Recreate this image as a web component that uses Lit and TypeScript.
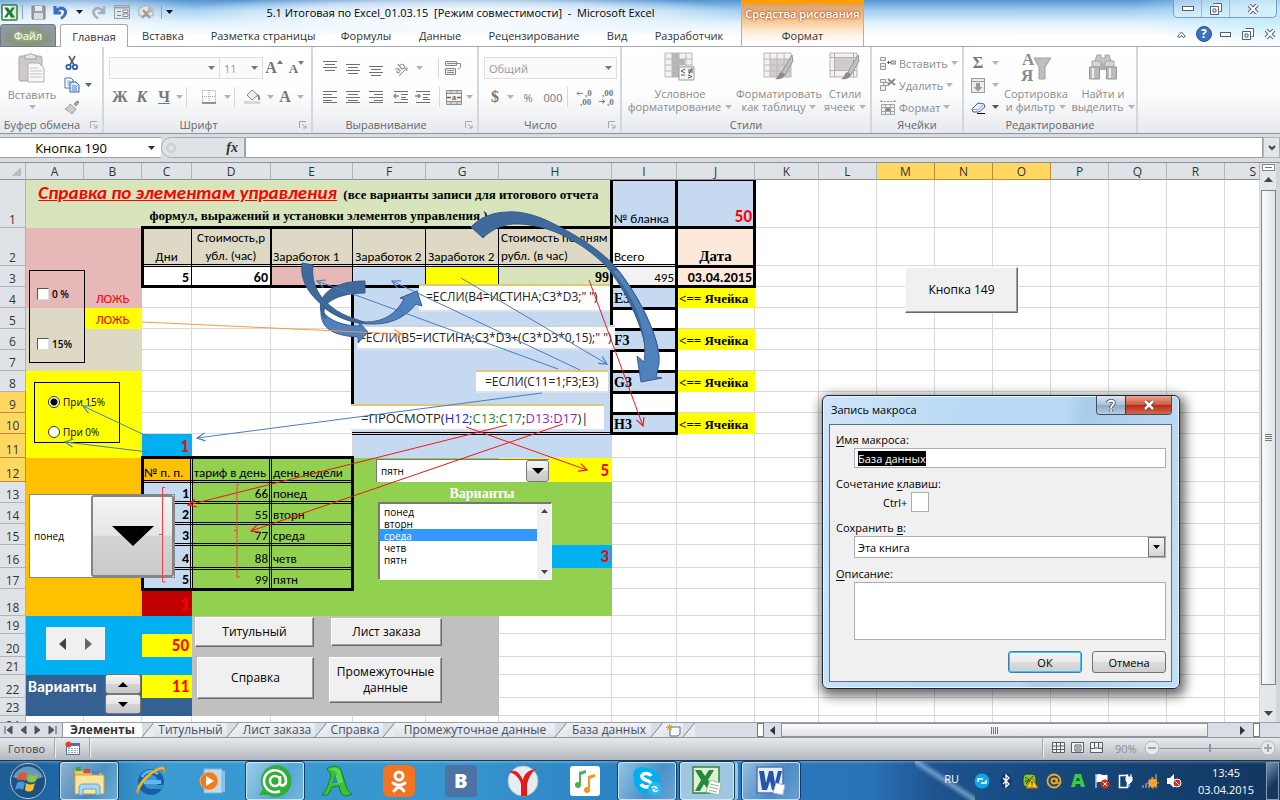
import { LitElement, html, css, svg, nothing } from "lit";
import { customElement } from "lit/decorators.js";
import { classMap } from "lit/directives/class-map.js";

const COLS: [string, number][] = [
  ["A", 58], ["B", 58], ["C", 50], ["D", 79], ["E", 82], ["F", 73], ["G", 73], ["H", 113], ["I", 65], ["J", 78],
  ["K", 64], ["L", 58], ["M", 58], ["N", 58], ["O", 58], ["P", 58], ["Q", 58], ["R", 58], ["S", 0],
];
const ROWS = [48, 38, 21, 21, 21, 21, 21, 21, 21, 21, 24, 24, 21, 21, 21, 23, 21, 27, 18, 23, 18, 23, 18, 18];

const FILLS: [string, string][] = [
  ["A1:H1", "sage"], ["I1:J1", "sky"],
  ["A2:B4", "rose"], ["C2:H2", "tan"], ["J2:J3", "peach"],
  ["E3:E3", "rose"], ["F3:F3", "sky"], ["G3:G3", "yellow"], ["H3:H3", "sage"], ["I3:I3", "pale"],
  ["A5:B7", "tan"], ["B5:B5", "yellow"], ["F4:H11", "sky"],
  ["I4:I4", "sky"], ["I6:I6", "sky"], ["I8:I8", "sky"], ["I10:I10", "sky"],
  ["J4:J4", "yellow"], ["J6:J6", "yellow"], ["J8:J8", "yellow"], ["J10:J10", "yellow"],
  ["A8:B11", "yellow"], ["C11:C11", "azure"],
  ["A12:C18", "orange"], ["C13:C17", "sky"], ["C18:C18", "crimson"],
  ["D12:H18", "green"], ["H12:H12", "yellow"], ["H16:H16", "azure"],
  ["A19:C21", "azure"], ["C20:C20", "yellow"], ["A22:C23", "navy"], ["C22:C22", "yellow"],
  ["D19:G23", "gray"],
];

const TEXTS: Record<string, [string, string]> = {
  I1: ["№ бланка", ""], J1: ["50", "right red large"],
  C2: ["Дни", "center"], D2: ["Стоимость,р\nубл. (час)", "center two"], E2: ["Заработок 1", ""],
  F2: ["Заработок 2", ""], G2: ["Заработок 2", ""], H2: ["Стоимость по дням\nрубл. (в час)", "two"],
  I2: ["Всего", ""], J2: ["Дата", "center serif mid"],
  C3: ["5", "right bold"], D3: ["60", "right bold"], H3: ["99", "right serif"], I3: ["495", "right"], J3: ["03.04.2015", "right bold"],
  B4: ["ЛОЖЬ", "center redtext"], B5: ["ЛОЖЬ", "center redtext"],
  I4: ["E3", "serif"], I6: ["F3", "serif"], I8: ["G3", "serif"], I10: ["H3", "serif"],
  J4: ["<== Ячейка", "serif minor"], J6: ["<== Ячейка", "serif minor"], J8: ["<== Ячейка", "serif minor"], J10: ["<== Ячейка", "serif minor"],
  C11: ["1", "right red large"],
  C12: ["№ п. п.", ""], D12: ["тариф в день", ""], E12: ["день недели", ""],
  C13: ["1", "right bold"], D13: ["66", "right"], E13: ["понед", ""],
  C14: ["2", "right bold"], D14: ["55", "right"], E14: ["вторн", ""],
  C15: ["3", "right bold"], D15: ["77", "right"], E15: ["среда", ""],
  C16: ["4", "right bold"], D16: ["88", "right"], E16: ["четв", ""],
  C17: ["5", "right bold"], D17: ["99", "right"], E17: ["пятн", ""],
  C18: ["1", "right red large"], H12: ["5", "right red large"], H16: ["3", "right red large"],
  C20: ["50", "right red large"], C22: ["11", "right red large"], A22: ["Варианты", "white over"],
};

const fillOf = (c: number, r: number) => {
  let name = "";
  for (const [range, fill] of FILLS) {
    const [a, b] = range.split(":");
    const c1 = a.charCodeAt(0) - 65, c2 = b.charCodeAt(0) - 65;
    const r1 = +a.slice(1), r2 = +b.slice(1);
    if (c >= c1 && c <= c2 && r >= r1 && r <= r2) name = fill;
  }
  return name;
};

const box = (w: number, h: number, body: unknown, vb = `0 0 ${w} ${h}`) =>
  html`<svg width=${w} height=${h} viewBox=${vb} aria-hidden="true">${body}</svg>`;
const tri = (color = "#444") => html`<svg class="tri" width="7" height="4" viewBox="0 0 7 4" aria-hidden="true"><path d="M0 0h7L3.500 4z" fill=${color} /></svg>`;
const faint = () => tri("#b4b4b4");

const bars = (ys: number[], xs: [number, number][]) =>
  box(16, 16, ys.map((y, i) => svg`<path d="M${xs[i][0]} ${y + 0.5}H${xs[i][1]}" stroke="#6f6f6f" />`));
const full: [number, number][] = [[1, 15], [3, 13], [1, 15], [3, 13], [1, 15], [3, 13]];
const restore = svg`<path d="M3.500 .5h8v8h-2M.5 3.500h8v8h-8z" fill="#fff" stroke="#555f6b"/><path d="M3 6h3v3H3z" fill="none" stroke="#555f6b"/>`;
const cross = svg`<path d="M2 1l8 8M10 1L2 9" stroke="#555f6b" stroke-width="4"/><path d="M2 1l8 8M10 1L2 9" stroke="#fff" stroke-width="2"/>`;

const I = {
  excelSmall: () => box(17, 17, svg`<rect x="1" y="1" width="15" height="15" rx="1" fill="#fff" stroke="#2f7d3a" stroke-width="1.500"/><path d="M9 2h6v13H9z" fill="#d7ecd0"/><path d="M3 3.500h4l2 3 2-3h3L10.500 8.300 14 13.500h-4L8 10.300 6 13.500H3l3.500-5z" fill="#1d7a35"/>`),
  save: () => box(15, 15, svg`<path d="M1 1h13v13H1z" fill="#9a9ea5" stroke="#7e8288"/><path d="M4 1h7v5H4z" fill="#e8eaee"/><path d="M3 8h9v6H3z" fill="#d9dce1"/>`),
  undo: () => box(15, 15, svg`<path d="M2 1v7h6M3 7C5 3 9 2 11.500 4.500S12 11 8 13.500" fill="none" stroke="#3a6fc4" stroke-width="3"/>`),
  redo: () => box(15, 15, svg`<path d="M13 1v7H7M12 7C10 3 6 2 3.500 4.500S3 11 7 13.500" fill="none" stroke="#a7afba" stroke-width="2.600"/>`),
  form: () => box(16, 14, svg`<rect x=".5" y=".5" width="15" height="13" fill="#e3e6ea" stroke="#9a9fa6"/><path d="M1 2.500h14" stroke="#9a9fa6" stroke-width="2"/><path d="M3 6.500h4M3 10.500h4" stroke="#83888f"/><path d="M9 5h5v2.500H9zM9 9h5v2.500H9z" fill="#fff" stroke="#83888f"/>`),
  toolsPic: () => box(17, 16, svg`<path d="M1 4h3l1-2h5l1 2h4v8H1z" fill="#e9e5e6" stroke="#b0aaac"/><path d="M4 14l8-8M12 14L5 6" stroke="#9e989a" stroke-width="2.200"/><circle cx="12" cy="6" r="2.500" fill="#bdb6b8"/>`),
  paste: () => box(28, 32, svg`<rect x="1" y="4" width="23" height="25" rx="2" fill="#cfc9cc" stroke="#aaa4a7"/><path d="M7 7V3h3a3 3 0 0 1 5 0h3v4z" fill="#e7e5e6" stroke="#a6a1a4"/><path d="M10 11h11l5 5v14H10z" fill="#f7f7f7" stroke="#b3aeb1"/><path d="M12 16h8M12 19h12M12 22h12M12 25h12" stroke="#c9c5c7"/>`),
  cut: () => box(14, 16, svg`<path d="M4 1l5 9M10 1L5 10" stroke="#54606e" stroke-width="1.600"/><circle cx="3.500" cy="12" r="2.200" fill="none" stroke="#2f5fb5" stroke-width="1.800"/><circle cx="10" cy="12" r="2.200" fill="none" stroke="#2f5fb5" stroke-width="1.800"/>`),
  copy: () => box(16, 16, svg`<path d="M1 1h6l2 2v8H1z" fill="#fff" stroke="#3f72b8"/><path d="M3 4h3M3 6h3M3 8h3" stroke="#7ba0d4"/><path d="M6 5h6l3 3v7H6z" fill="#dbe8f8" stroke="#3465ad"/><path d="M8 9h5M8 11h5M8 13h5" stroke="#5c89c8"/>`),
  brush: () => box(16, 15, svg`<path d="M10 4l3-3 2 1-3 4z" fill="#aaa" stroke="#888"/><path d="M6 4l6 5-4 5C6 12 3 10 1 9c3-1 4-3 5-5z" fill="#cfcfcf" stroke="#9a9a9a"/>`),
  growFont: (up: boolean) => box(7, 20, up ? svg`<path d="M0 6h6L3 2z" fill="#777"/>` : svg`<path d="M0 3h6L3 7z" fill="#777"/>`),
  borders: () => box(14, 14, svg`<path d="M.5 .5h13v12H.5zM7 0v13M0 6.500h14" fill="none" stroke="#a0a0a0" stroke-dasharray="1 1"/><path d="M0 13h14" stroke="#777" stroke-width="1.500"/>`),
  bucket: () => box(17, 16, svg`<path d="M3 6l5-5 6 5-6 5z" fill="#eee" stroke="#888"/><path d="M13 6c3 1 2 4 2 5" stroke="#888" stroke-width="2" fill="none"/><path d="M0 12h16v3H0z" fill="#dcd6d8"/>`),
  orient: () => box(18, 18, svg`<text x="2" y="12" font-size="10" font-weight="400" font-family="Open Sans,sans-serif" fill="#777" transform="rotate(-40 8 9)">ab</text><path d="M7 17l8-8m0 0h-3m3 0v3" stroke="#8a8a8a" fill="none"/>`),
  outdent: () => box(16, 14, svg`<path d="M1 1.500h14M8 4.500h7M8 7.500h5M8 9.500h7M1 12.500h14" stroke="#6f6f6f"/><path d="M6 6H1m2-2L1 6l2 2" stroke="#8a8a8a" fill="none" stroke-width="1.500"/>`),
  indent: () => box(16, 14, svg`<path d="M1 1.500h14M8 4.500h7M8 7.500h5M8 9.500h7M1 12.500h14" stroke="#6f6f6f"/><path d="M0 6h5m-2-2l2 2-2 2" stroke="#8a8a8a" fill="none" stroke-width="1.500"/>`),
  wrap: () => box(16, 16, svg`<path d="M.5 1.500h11v4H.5zM.5 8.500h10v6H.5z" fill="#eee" stroke="#8a8a8a"/><path d="M2 3.500h13.500v4L13 9M2 10.500h7M2 12.500h7" stroke="#8a8a8a" fill="none"/>`),
  merge: () => box(16, 15, svg`<path d="M.5 .5h15v14H.5zM0 3.500h16M0 11.500h16M5 0v3M11 0v3M5 12v3M11 12v3" fill="#d8d8d8" stroke="#909090"/><path d="M1 4h14v7H1z" fill="#f4f4f4"/><text x="6" y="10" font-size="8" font-weight="700" fill="#666">a</text><path d="M1 7.500h4M11 7.500h4" stroke="#666" stroke-width="1.500"/>`),
  cond: () => box(32, 31, svg`<path d="M1 1h27v24H1z" fill="#f3f1f2"/><path d="M8 1h7v24H8zM15 7h6v6h-6z" fill="#b9b5b7"/><path d="M1 1h27v24H1zM1 7h27M1 13h27M1 19h27M8 1v24M15 1v24M22 1v24" fill="none" stroke="#bcb8ba"/><path d="M15 15h15v13H15z" fill="#f6f6f6" stroke="#999"/><path d="M21 17l-4 2 4 2M17 23h4M24 18h5M24 20h5M28 16l-3 6M24 23l4 1.500-4 1.500" stroke="#555" fill="none"/>`),
  tableStyle: () => box(32, 31, svg`<path d="M1 1h27v24H1z" fill="#f3f1f2"/><path d="M7 7h21v18H7z" fill="#d2ced0"/><path d="M1 1h27v24H1zM1 7h27M1 13h27M1 19h27M7 1v24M14 1v24M21 1v24" fill="none" stroke="#bcb8ba"/><path d="M29 3L19 20l3 3L30 9z" fill="#c4c0c2" stroke="#979395"/><path d="M18 20l4 3c-2 4-6 5-10 4 3-1 3-5 6-7z" fill="#8e8a8c"/>`),
  cellStyle: () => box(32, 31, svg`<path d="M1 1h27v24H1z" fill="#f3f1f2"/><path d="M5 6h19v12H5z" fill="#cfcbcd"/><path d="M1 1h27v24H1zM1 5.500h27M1 18.500h27M5.500 1v24M24.500 1v24" fill="none" stroke="#b5b1b3"/><path d="M29 3L19 20l3 3L30 9z" fill="#c4c0c2" stroke="#979395"/><path d="M18 20l4 3c-2 4-6 5-10 4 3-1 3-5 6-7z" fill="#8e8a8c"/>`),
  ins: () => box(16, 15, svg`<path d="M.5 1.500h5v3h-5zM.5 7.500h5v3h-5zM.5 10.500h5v3h-5z" fill="#eee" stroke="#999"/><path d="M7 6.500h4M8.500 5v3" stroke="#555"/><path d="M11 5h5v3h-5z" fill="#ccc" stroke="#888"/>`),
  del: () => box(16, 15, svg`<path d="M.5 1.500h5v3h-5zM3.500 4.500h5v3h-5zM.5 7.500h5v5h-5z" fill="#eee" stroke="#999"/><path d="M8 1l7 6M15 1L8 7" stroke="#8a8a8a" stroke-width="2"/>`),
  fmt: () => box(16, 16, svg`<path d="M1 2.500h14M1 1v3M15 1v3" stroke="#999" stroke-dasharray="2 1"/><path d="M1.500 5.500h13v10h-13zM1 8.500h14M1 12.500h14M5.500 5v10M10.500 5v10" fill="#eee" stroke="#a5a5a5"/><path d="M6 9h4v3H6z" fill="#888"/>`),
  fillDown: () => box(14, 15, svg`<rect x=".5" y=".5" width="13" height="14" fill="#ececec" stroke="#9a9a9a"/><path d="M1 3.500h12" stroke="#9a9a9a"/><path d="M5 5h4v4h2.500L7 13.500 2.500 9H5z" fill="#999"/>`),
  eraser: () => box(15, 13, svg`<path d="M1 8l6-6 6 1 1 3-6 5-6 0z" fill="#e8effa" stroke="#4c5f85"/><path d="M1 8l6 1 6-6" fill="none" stroke="#8fa3c8"/><path d="M6 12.500h8" stroke="#000"/>`),
  sort: () => box(30, 31, svg`<path d="M13 6h17l-6 9v12h-6V15z" fill="#c1bec0" stroke="#a19d9f"/><text x="1" y="13" font-family="Liberation Serif,serif" font-size="17" font-weight="700" fill="#8d8a8c">А</text><text x="0" y="29" font-family="Liberation Serif,serif" font-size="17" font-weight="700" fill="#8d8a8c">Я</text>`),
  find: () => box(28, 31, svg`<path d="M8 3h4v3h4V3h4l3 9H5z" fill="#c9c6c8" stroke="#a5a2a4"/><path d="M11 12h6v6h-6z" fill="#b3b0b2"/><path d="M3 9h9v6H3zM16 9h9v6h-9z" fill="#d6d3d5" stroke="#a5a2a4"/><path d="M.5 15h10v12H.5zM17.500 15h10v12h-10z" fill="#bdbabc" stroke="#999698"/><path d="M4 16v10M21 16v10" stroke="#f0eeef" stroke-width="2"/>`),
  launcher: () => box(8, 8, svg`<path d="M.5 7V.5H7M3 3l4 4m0-3v3H4" fill="none" stroke="#a3a8ae"/>`),
};

@customElement("app-root")
export class AppRoot extends LitElement {
  static styles = css`
    :host {
      display: flex; flex-direction: column; height: 100vh; overflow: hidden; background: #fff;
      font-family: "Open Sans", "Noto Sans", sans-serif; font-size: 12px; color: #1e1e1e;
    }
    * { box-sizing: border-box; }
    svg { display: block; flex: none; }
    button, input, select, textarea { font: inherit; color: inherit; margin: 0; padding: 0; border-radius: 0; }
    button { border: 0; background: none; white-space: nowrap; }

    .head { display: flex; flex: none; height: 47px; border-bottom: 1px solid #a3a9b1; font-size: 11px;
      background: radial-gradient(ellipse 280px 20px at 460px 13px, rgba(255,255,255,.95), rgba(255,255,255,.6) 60%, transparent),
        radial-gradient(ellipse 130px 26px at 70px 14px, rgba(255,255,255,.8), transparent),
        radial-gradient(ellipse 150px 40px at 100% 10px, rgba(190,236,255,.95), transparent),
        linear-gradient(#5795d2, #9fcdf0 22%, #e2f2fc 50%, #fff 80%); }
    .head-main { flex: none; width: 741px; }
    .title-row { display: flex; height: 24px; align-items: center; }
    .qat { display: flex; align-items: center; width: 180px; padding-left: 1px; }
    .qat button { display: grid; place-items: center; width: 16px; height: 20px; }
    .qat button.wide { width: 22px; }
    .qat button.gap { width: 26px; }
    .bar { width: 1px; height: 14px; background: #8fa0b5; margin: 0 4px; }
    .title { flex: 1; text-align: center; white-space: pre; color: #000; }
    .tabs { display: flex; height: 23px; }
    .tabs button { color: #333; height: 23px; padding-bottom: 1px; }
    .tabs .file { width: 56px; margin-right: 4px; border-radius: 3px 3px 0 0; color: #fff; border: 1px solid #6f7b88;
      background: radial-gradient(ellipse at 50% 60%, #7b9a5e, #87957f 45%, #929ba6 80%); text-shadow: 0 0 4px #cfe6b0; }
    .tabs .on { background: #fff; border: 1px solid #a3a9b1; border-bottom: 0; border-radius: 3px 3px 0 0; height: 24px; width: 68px; }
    .ctx { flex: none; width: 123px; text-align: center; border-top: 4px solid #ff9d00; border-left: 1px solid #f2a04a; border-right: 1px solid #f2a04a;
      background: linear-gradient(#dba06a, #f5c994 40%, #fff5e8 75%, #fff); }
    .ctx span { display: block; height: 20px; line-height: 20px; color: #fff; font-weight: 600; text-shadow: 0 0 2px #b8521d, 0 0 3px #b8521d; }
    .ctx button { width: 100%; height: 22px; color: #333; }
    .head-right { flex: 1; display: flex; flex-direction: column; align-items: flex-end; }
    .wctl { display: flex; margin-right: 3px; height: 18px; border: 1px solid #7f9db8; border-top: 0; border-radius: 0 0 5px 5px; background: rgba(255,255,255,.35); }
    .wctl button { display: grid; place-items: center; width: 28px; border-right: 1px solid #9db6cc; }
    .wctl button:last-child { width: 46px; border: 0; }
    .dctl { display: flex; align-items: center; gap: 1px; padding: 6px 0 0; }
    .dctl button { display: grid; place-items: center; width: 21px; height: 20px; }

    .ribbon { display: flex; flex: none; height: 87px; font-size: 11px; color: #8c8c8c;
      background: linear-gradient(#fff, #fcfdfd 55%, #e6e9ed); border-bottom: 1px solid #8f959c; }
    .group { display: flex; flex-direction: column; border-right: 2px solid #d4d8dd; flex: none; }
    .gbody { display: flex; height: 71px; padding-top: 5px; }
    .gname { position: relative; height: 15px; line-height: 13px; color: #63676d; display: flex; justify-content: center; }
    .gname.launch { padding-right: 18px; }
    .gname button { position: absolute; right: 4px; top: 3px; }
    .col { display: flex; flex-direction: column; }
    .pad8 { padding-left: 8px; }
    .line { display: flex; align-items: center; height: 22px; }
    .two-lines { gap: 7px; padding: 5px 0 0 5px; }
    .slot { display: flex; align-items: center; justify-content: center; height: 20px; flex: none; color: #777; font-family: "Liberation Serif", serif; font-size: 16px; font-weight: 700; }
    .w5 { width: 5px; } .w8 { width: 8px; } .w12 { width: 12px; } .w16 { width: 16px; } .w22 { width: 22px; } .w23 { width: 23px; } .w28 { width: 28px; }
    .vsep { width: 1px; height: 20px; background: #d5d8dc; margin: 0 3px; flex: none; }
    .drop { display: flex; align-items: center; justify-content: space-between; height: 22px; border: 1px solid #dcdfe3; background: #fafafa; padding: 0 4px; color: #999; }
    .f1 { width: 111px; } .f2 { width: 43px; border-left: 0; } .f3 { width: 133px; }
    .bigbtn { display: flex; flex-direction: column; align-items: center; line-height: 13px; }
    .bigbtn > svg:first-child { margin-bottom: 4px; }
    .bigbtn > svg.tri { margin-top: 4px; }
    .bigbtn .cap { display: flex; align-items: center; gap: 4px; }
    .plain { font-size: 11px; font-family: "Open Sans", sans-serif; font-weight: 400; }
    .shorter { font-size: 13px; padding-top: 2px; }
    .cellbtn { display: flex; align-items: center; gap: 3px; height: 22px; }

    .fbar { display: flex; flex: none; height: 29px; padding: 3px 0 4px; background: #d9dde3; border-bottom: 1px solid #8c9197; }
    .namebox { display: flex; align-items: center; width: 161px; background: #fff; border: 1px solid #9ca1a8; border-left: 0; border-right: 0; padding-right: 6px; font-size: 13px; }
    .namebox input { width: 140px; flex: 1; border: 0; background: none; text-align: center; padding-right: 6px; color: #000; outline: 0; }
    .fx { display: flex; align-items: center; justify-content: space-between; width: 84px; border: 1px solid #a5aab1; border-radius: 11px 0 0 11px; background: #dfe3e7; padding: 0 6px 0 4px; }
    .knob { width: 10px; height: 10px; border-radius: 50%; background: radial-gradient(#eef0f2, #b2b7bd); }
    .fx button { font: italic 700 14px "Liberation Serif", serif; color: #333; }
    .formula { flex: 1; border: 1px solid #9ca1a8; background: #fff; min-width: 0; outline: 0; }
    .expand { width: 17px; display: grid; place-items: center; background: #e3e6ea; border: 1px solid #b0b5bc; }

    .work { display: flex; flex: 1; min-height: 0; }
    .sheet { position: relative; flex: 1; overflow: hidden; background: #fff; min-width: 0; }
    table { border-collapse: separate; border-spacing: 0; table-layout: fixed; width: 100%; font-family: "Carlito", "Lato", "Open Sans", sans-serif; font-size: 13px; }
    th { font-weight: 400; padding: 0; background: #dfe3e8; border-right: 1px solid #b0b5bc; border-bottom: 1px solid #b0b5bc; color: #333; line-height: 15px; font-size: 12px; vertical-align: bottom; font-family: "Open Sans", sans-serif; }
    thead th { height: 17px; vertical-align: middle; border-bottom-color: #8c9197; }
    th.hot { background: #ffd862; border-color: #c48a33; }
    th.last { text-align: right; padding-right: 3px; }
    td { padding: 0 2px; border-right: 1px solid #d9d9d9; border-bottom: 1px solid #d9d9d9; vertical-align: bottom; line-height: 17px; white-space: pre; overflow: hidden; color: #000; }
    td.filled { border-color: transparent; }
    .sage { background: #d8e4bc; } .sky { background: #c5d9f1; } .rose { background: #e6b8b7; } .tan { background: #ddd9c4; }
    .peach { background: #fde9d9; } .yellow { background: #ff0; } .pale { background: #f2f2f2; } .azure { background: #00b0f0; }
    .orange { background: #ffc000; } .green { background: #92d050; } .crimson { background: #c00000; } .navy { background: #366092; } .gray { background: #c0c0c0; }
    td.right { text-align: right; } td.center { text-align: center; } td.bold { font-weight: 700; font-size: 14px; }
    td.red { color: #f00; font-weight: 700; } td.redtext { color: #f00; } td.large { font-size: 17px; line-height: 20px; }
    td.serif { font-family: "Liberation Serif", serif; font-weight: 700; font-size: 14px; } td.serif.minor { font-size: 13px; } td.serif.mid { font-size: 15px; }
    td.two { line-height: 18px; } td.white { color: #fff; font-weight: 700; font-size: 16px; line-height: 20px; } td.over { overflow: visible; }
    td.heading { text-align: center; font: 700 13px/23px "Liberation Serif", serif; }
    .heading div { height: 23px; overflow: visible; }
    .heading a { font: italic 700 19px/23px "Carlito", "Lato", "Open Sans", sans-serif; color: #f00; text-decoration: underline; }
    .corner { display: block; width: 0; height: 0; margin: 0 4px 0 auto; border-left: 9px solid transparent; border-bottom: 9px solid #b6bbc1; }

    .lines, .arrows { position: absolute; left: 0; top: 0; pointer-events: none; }
    .obj { position: absolute; }
    .frame { border: 1px solid #000; display: flex; flex-direction: column; justify-content: space-between; font-size: 10px; color: #000; font-weight: 600; }
    .frame label { display: flex; align-items: center; gap: 3px; height: 12px; line-height: 12px; white-space: nowrap; }
    .frame input { appearance: none; width: 12px; height: 12px; background: #fff; border: 1px solid #555; border-right-color: #ddd; border-bottom-color: #ddd; flex: none; }
    .frame input[type="radio"] { border: 1px solid #333; border-radius: 50%; }
    .frame input[type="radio"]:checked { background: radial-gradient(#000 3px, #fff 4px); }
    .checks { left: 29px; top: 107px; width: 56px; height: 93px; padding: 17px 7px 12px; }
    .radios { left: 34px; top: 219px; width: 86px; height: 61px; padding: 13px 12px 4px 13px; font-weight: 400; }
    .picker { display: flex; background: #fff; border: 1px solid #888; }
    .picker select { appearance: none; border: 0; background: none; flex: 1; min-width: 0; font-size: 10px; color: #000; padding-left: 4px; outline: 0; }
    .picker button, .vspin button { display: grid; place-items: center; border: 1px solid #777; border-radius: 3px; background: linear-gradient(#f4f4f4, #e6e6e6 49%, #d4d4d4 50%, #c9c9c9); }
    .bigpick { left: 29px; top: 331px; width: 146px; height: 84px; }
    .bigpick button { width: 83px; border: 2px solid #858585; }
    .combo { left: 376px; top: 296px; width: 173px; height: 23px; border: 0; border-top: 1px solid #777; border-left: 1px solid #777; }
    .combo button { width: 23px; }
    .hspin { left: 46px; top: 464px; width: 59px; height: 33px; display: flex; justify-content: space-around; align-items: center; background: #f0f0f0; padding: 0 4px 0 3px; }
    .vspin { left: 105px; top: 511px; width: 36px; height: 40px; display: flex; flex-direction: column; }
    .vspin button { flex: 1; }
    .cmd { position: absolute; background: #f0f0f0; border: 1px solid #fff; border-right: 1px solid #696969; border-bottom: 1px solid #696969; box-shadow: inset -1px -1px #a0a0a0; color: #000; font-size: 12px; line-height: 16px; white-space: normal; }
    .c1 { left: 195px; top: 454px; width: 119px; height: 30px; } .c2 { left: 331px; top: 455px; width: 111px; height: 28px; }
    .c3 { left: 197px; top: 494px; width: 117px; height: 42px; } .c4 { left: 329px; top: 494px; width: 113px; height: 46px; }
    .c5 { left: 905px; top: 104px; width: 113px; height: 46px; }
    .caption { left: 376px; top: 322px; width: 212px; text-align: center; font: 700 14px/17px "Liberation Serif", serif; color: #fff; }
    .list { left: 378px; top: 339px; width: 174px; height: 78px; display: flex; background: #fff; border: 1px solid #fff; border-top: 2px solid #777; border-left: 2px solid #777; }
    .list select { appearance: none; flex: 1; border: 0; overflow: hidden; background: #fff; font-size: 10px; line-height: 12px; color: #000; padding: 1px 0; outline: 0; height: 74px; }
    .list option { padding: 0 4px; height: 12px; min-height: 12px; line-height: 12px; }
    .list option:checked { background: #39f linear-gradient(#39f, #39f); color: #fff; }
    .lscroll { width: 14px; display: flex; flex-direction: column; justify-content: space-between; align-items: center; padding: 5px 0; background: #f0f0f0; }
    .pic { position: absolute; background: #fff; border-top: 2px solid #e0c878; border-bottom: 2px solid #dde2ea; color: #222; font-family: "Open Sans", sans-serif; white-space: pre; font-size: 12px; line-height: 21px; padding-left: 7px; overflow: hidden; }
    .p1 { left: 419px; top: 121px; width: 191px; height: 28px; }
    .p2 { left: 357px; top: 162px; width: 258px; height: 25px; padding-left: 2px; border-top-color: #cfd3da; }
    .p3 { left: 476px; top: 207px; width: 132px; height: 23px; padding-left: 9px; line-height: 20px; }
    .p4 { left: 351px; top: 241px; width: 253px; height: 27px; padding-left: 10px; font-size: 13px; line-height: 25px; }
    .blue { color: #2222e0; } .grn { color: #1d8a1d; } .vio { color: #9a1dc4; }

    .dialog { position: absolute; left: 822px; top: 232px; width: 358px; height: 294px; border: 1px solid #1c2733; border-radius: 6px; padding: 0 7px 6px 6px; display: flex; flex-direction: column;
      background: linear-gradient(100deg, #cfe5f8, #b9daf6 35%, #b9daf6 60%, #a9cceb 65%, #c3dff7); box-shadow: inset 0 0 0 1px #eaf5fd, 2px 4px 12px 3px rgba(0,0,0,.6); color: #000; font-size: 11px; }
    .dtitle { display: flex; justify-content: space-between; height: 28px; flex: none; padding-left: 2px; }
    .dtitle span { line-height: 28px; }
    .dbtns { display: flex; height: 19px; border: 1px solid #3d4f60; border-top: 0; border-radius: 0 0 4px 4px; overflow: hidden; }
    .dbtns button { display: grid; place-items: center; width: 28px; color: #fff; background: linear-gradient(#dfe8f1, #a9bfd4 50%, #8fabc6 51%, #b5cbe0); }
    .dbtns .close { width: 46px; border-left: 1px solid #5a2a20; background: linear-gradient(#e8a493, #cf5b42 48%, #b62b16 52%, #d3694c); }
    .dbody { flex: 1; background: #f0f0f0; border: 1px solid #5c6d7d; padding: 6px 5px 8px 6px; display: flex; flex-direction: column; }
    .dbody label { line-height: 17px; height: 17px; flex: none; }
    .dbody u { text-underline-offset: 2px; }
    .field { margin-left: 18px; border: 1px solid #abadb3; background: #fff; height: 20px; display: flex; align-items: center; flex: none; }
    input.field { padding: 0 3px; outline: 0; }
    input::selection { background: #000; color: #fff; }
    .keys { display: flex; align-items: center; gap: 4px; height: 20px; margin-left: 47px; flex: none; }
    .keys input { width: 18px; height: 20px; border: 1px solid #abadb3; }
    .sel { height: 22px; padding-left: 3px; }
    .sel select { appearance: none; border: 0; flex: 1; background: none; outline: 0; }
    .sel button { width: 17px; height: 20px; display: grid; place-items: center; border: 1px solid #777; background: linear-gradient(#f4f4f4, #d4d4d4); }
    .space { margin-top: 7px; }
    textarea.field { height: 58px; resize: none; outline: 0; }
    .acts { display: flex; justify-content: flex-end; gap: 10px; margin-top: auto; }
    .acts button { width: 74px; height: 22px; border: 1px solid #707070; border-radius: 3px; background: linear-gradient(#f3f3f3, #ebebeb 49%, #dcdcdc 50%, #cfcfcf); }
    .acts .def { border-color: #3c7fb1; box-shadow: inset 0 0 0 1px #3cc7f3; }

    .vscroll { width: 20px; flex: none; display: flex; flex-direction: column; align-items: center; background: #e3e7ec; border-right: 4px solid #d0d5dc; padding: 1px 0 6px; }
    .vsplit { width: 13px; height: 7px; border: 1px solid #888; background: #fff; flex: none; display: grid; place-items: center; }
    .up { margin: 6px 0 8px; } .down { margin-top: 26px; }
    .vthumb { flex: 1; width: 15px; border: 1px solid #7b8590; background: linear-gradient(90deg, #fbfbfc, #dfe3e8); display: grid; place-items: center; }

    .sheets { display: flex; flex: none; height: 16px; background: #d9dee6; border-top: 1px solid #9a9fa6; border-bottom: 1px solid #8e939a; font-size: 12px; color: #44505f; }
    .nav { display: flex; width: 63px; align-items: center; justify-content: space-around; padding: 0 2px; border-right: 1px solid #8e939a; }
    .nav button { display: grid; place-items: center; width: 12px; }
    .sheets .tab { flex: none; line-height: 14px; color: #44505f; height: 14px; display: grid; place-items: center; background: linear-gradient(#eef1f5, #dfe3e9); }
    .sheets .tab.act { font-weight: 700; background: #fff; color: #333; }
    .hsplit { width: 7px; height: 14px; border: 1px solid #777; background: #fff; margin-left: 62px; flex: none; }
    .hs { display: flex; align-items: center; flex: 1; padding-left: 6px; }
    .hs .hsplit { margin: 0 20px 0 8px; }
    .hthumb { flex: 1; height: 14px; border: 1px solid #8f949b; background: linear-gradient(#fbfbfc, #dfe3e8); display: grid; place-items: center; margin: 0 32px 0 6px; }

    .status { display: flex; flex: none; align-items: center; height: 22px; background: linear-gradient(#e6e9ec, #c9ccd1 60%, #b4b8be); color: #444; font-size: 11px; padding: 0 4px 2px 8px; }
    .status .s { width: 2px; height: 20px; background: #a2a6ac; border-right: 1px solid #eee; margin: 0 9px; }
    .status .s.push { margin: 0 8px 0 auto; }
    .views { display: flex; gap: 5px; margin: 0 11px 0 0; }
    .zoom { color: #8d9095; width: 29px; }
    .track { position: relative; width: 100px; height: 1px; background: #8b95a3; }
    .track i { position: absolute; left: 49px; top: -4px; width: 2px; height: 8px; background: #8b95a3; }

    .taskbar { display: flex; flex: none; height: 40px; align-items: center; border-top: 1px solid #16385c;
      background: linear-gradient(rgba(255,255,255,.25), transparent 8%),
        linear-gradient(to bottom left, transparent 42%, rgba(160,200,230,.6) 50%, transparent 58%) 75% 0 / 60px 100% no-repeat,
        linear-gradient(90deg, #1d5c94, #1f6aa8 5%, #3b9ad0 12%, #3796cf 35%, #2a80c2 50%, #2a72b8 68%, #1d548f 73%, #16497d 82%, #12365f); }
    .start { width: 56px; display: grid; place-items: center; margin-right: 4px; }
    .apps { display: flex; gap: 4px; height: 38px; }
    .apps button { width: 58px; height: 38px; display: grid; place-items: center; border-radius: 3px; border: 1px solid transparent; }
    .apps .run { border-color: rgba(220,240,255,.8); background: linear-gradient(120deg, rgba(255,255,255,.5), rgba(255,255,255,.15) 60%, rgba(255,255,255,.3)); box-shadow: 0 0 0 1px #153e66; }
    .apps .cur { background: rgba(225,240,245,.65); width: 54px; margin-right: 4px; box-shadow: 0 0 0 1px #153e66, 4px 0 0 0 rgba(190,215,235,.8); }
    .tray { margin-left: auto; display: flex; align-items: center; color: #fff; font-size: 11px; }
    .lang { margin-right: 11px; padding-bottom: 4px; }
    .tray button { width: 24px; display: grid; place-items: center; }
    .clock { text-align: center; line-height: 17px; width: 76px; margin: 0 2px; }
    .tray .desk { width: 13px; height: 38px; margin-right: 1px; border: 1px solid #7f9cb8; background: linear-gradient(135deg, #7594b4, #17375c 60%); }
  `;

  private title() {
    const tabs: [string, number][] = [["Вставка", 70], ["Разметка страницы", 130], ["Формулы", 76], ["Данные", 72], ["Рецензирование", 116], ["Вид", 50], ["Разработчик", 94]];
    return html`<header class="head">
      <div class="head-main">
        <div class="title-row">
          <div class="qat">
            ${I.excelSmall()}<i class="bar"></i>
            <button aria-label="Сохранить" class="wide">${I.save()}</button>
            <button aria-label="Отменить" class="wide">${I.undo()}</button>
            <button aria-label="Список отмены">${tri("#222")}</button>
            <button aria-label="Вернуть" class="wide">${I.redo()}</button>
            <button aria-label="Форма" class="gap">${I.form()}</button>
            <button aria-label="Сервис" class="wide">${I.toolsPic()}</button>
            <i class="bar"></i>${tri("#111")}
          </div>
          <span class="title">5.1 Итоговая по Excel_01.03.15  [Режим совместимости]  -  Microsoft Excel</span>
        </div>
        <nav class="tabs">
          <button class="file">Файл</button>
          <button class="on">Главная</button>
          ${tabs.map(([t, w]) => html`<button style="width:${w}px">${t}</button>`)}
        </nav>
      </div>
      <div class="ctx"><span>Средства рисования</span><button>Формат</button></div>
      <div class="head-right">
        <div class="wctl">
          <button aria-label="Свернуть">${box(12, 6, svg`<rect x=".5" y=".5" width="11" height="4" fill="#fff" stroke="#555f6b"/>`)}</button>
          <button aria-label="Развернуть">${box(12, 12, restore)}</button>
          <button aria-label="Закрыть">${box(12, 10, cross)}</button>
        </div>
        <div class="dctl">
          <button aria-label="Свернуть ленту">${box(9, 7, svg`<path d="M.5 5.500L4.500 1l4 4.500L6 6.500 4.500 4.500 3 6.500z" fill="#fff" stroke="#555f6b"/>`)}</button>
          <button aria-label="Справка">${box(16, 16, svg`<circle cx="8" cy="8" r="7.500" fill="#3d6fc0" stroke="#2b559c"/><text x="5" y="12" font-size="12" font-weight="700" fill="#fff">?</text>`)}</button>
          <button aria-label="Свернуть книгу">${box(11, 5, svg`<rect x=".5" y=".5" width="10" height="4" fill="#fff" stroke="#555f6b"/>`)}</button>
          <button aria-label="Восстановить книгу">${box(12, 12, restore)}</button>
          <button aria-label="Закрыть книгу">${box(12, 10, cross)}</button>
        </div>
      </div>
    </header>`;
  }

  private group(name: string, width: number, launch: boolean, body: unknown) {
    return html`<section class="group" style="width:${width}px">
      <div class="gbody">${body}</div>
      <div class="gname ${launch ? "launch" : ""}">${name}${launch ? html`<button aria-label=${name}>${I.launcher()}</button>` : nothing}</div>
    </section>`;
  }

  private big(icon: unknown, lines: string[], width: number, arrowBelow = false) {
    return html`<button class="bigbtn" style="width:${width}px">${icon}${lines.map((l, i) =>
      html`<span class="cap">${l}${!arrowBelow && i === lines.length - 1 ? faint() : nothing}</span>`)}${arrowBelow ? faint() : nothing}</button>`;
  }

  private ribbon() {
    const b = (w: string, body: unknown) => html`<button class="slot ${w}">${body}</button>`;
    const gap = (w: string) => html`<i class=${w}></i>`;
    const sep = html`<i class="vsep"></i>`;
    const five = [2, 5, 8, 11, 13];
    return html`<div class="ribbon">
      ${this.group("Буфер обмена", 104, true, html`
        ${this.big(I.paste(), ["Вставить"], 64, true)}
        <div class="col">
          <div class="line">${b("w16", I.cut())}</div>
          <div class="line">${b("w16", I.copy())}${gap("w5")}${tri("#666")}</div>
          <div class="line">${b("w16", I.brush())}</div>
        </div>`)}
      ${this.group("Шрифт", 209, true, html`<div class="col two-lines">
          <div class="line"><button class="drop f1" aria-label="Шрифт"><i></i>${tri("#777")}</button><button class="drop f2"><span>11</span>${tri("#777")}</button>
            ${b("w23", html`A${I.growFont(true)}`)}${b("w22", html`<span class="shorter">A</span>${I.growFont(false)}`)}</div>
          <div class="line">${b("w22", "Ж")}${b("w22", html`<i>К</i>`)}${b("w22", html`<u>Ч</u>`)}${b("w8", faint())}${sep}${gap("w5")}
            ${b("w28", I.borders())}${b("w8", faint())}${sep}${b("w28", I.bucket())}${b("w8", faint())}${b("w22", "А")}${b("w8", faint())}</div>
        </div>`)}
      ${this.group("Выравнивание", 166, true, html`<div class="col two-lines">
          <div class="line">${b("w23", bars([1, 4, 7, 10], full))}${b("w23", bars([4, 7, 10, 13], full))}${b("w23", bars([6, 9, 12, 15], full))}${b("w28", I.orient())}${b("w8", faint())}${gap("w12")}${sep}${b("w22", I.wrap())}</div>
          <div class="line">${b("w23", bars(five, [[1, 15], [1, 10], [1, 15], [1, 10], [1, 15]]))}${b("w23", bars(five, [[1, 15], [3, 13], [1, 15], [3, 13], [1, 15]]))}${b("w23", bars(five, [[1, 15], [6, 15], [1, 15], [6, 15], [1, 15]]))}${b("w28", I.outdent())}${b("w16", I.indent())}${gap("w5")}${sep}${b("w22", I.merge())}${b("w8", faint())}</div>
        </div>`)}
      ${this.group("Число", 143, true, html`<div class="col two-lines">
          <div class="line"><button class="drop f3"><span>Общий</span>${tri("#777")}</button></div>
          <div class="line">${b("w22", "$")}${b("w8", faint())}${b("w28", html`<span class="plain">%</span>`)}${b("w22", html`<span class="plain">000</span>`)}${sep}
            ${b("w28", box(18, 18, svg`<path d="M1 5.500h6m-4-2l-2 2 2 2" stroke="#888" fill="none"/><text x="9" y="8" font-size="9" fill="#777">,0</text><text x="4" y="17" font-size="9" fill="#777">,00</text>`))}
            ${b("w16", box(18, 18, svg`<path d="M1 13.500h6m-3-2l3 2-3 2" stroke="#888" fill="none"/><text x="4" y="8" font-size="9" fill="#777">,00</text><text x="9" y="17" font-size="9" fill="#777">,0</text>`))}</div>
        </div>`)}
      ${this.group("Стили", 250, false, html`
        ${this.big(I.cond(), ["Условное", "форматирование"], 116)}${this.big(I.tableStyle(), ["Форматировать", "как таблицу"], 82)}${this.big(I.cellStyle(), ["Стили", "ячеек"], 50)}`)}
      ${this.group("Ячейки", 92, false, html`<div class="col pad8">
          <button class="cellbtn">${I.ins()}<span>Вставить</span> ${faint()}</button>
          <button class="cellbtn">${I.del()}<span>Удалить</span> ${faint()}</button>
          <button class="cellbtn">${I.fmt()}<span>Формат</span> ${faint()}</button>
        </div>`)}
      ${this.group("Редактирование", 174, false, html`<div class="col">
          <div class="line">${b("w28", "Σ")}${faint()}</div>
          <div class="line">${b("w28", I.fillDown())}${faint()}</div>
          <div class="line">${b("w28", I.eraser())}${tri("#555")}</div>
        </div>
        ${this.big(I.sort(), ["Сортировка", "и фильтр"], 74)}${this.big(I.find(), ["Найти и", "выделить"], 60)}`)}
    </div>`;
  }

  private formulaBar() {
    return html`<div class="fbar">
      <div class="namebox"><input aria-label="Имя" value="Кнопка 190" />${tri("#333")}</div>
      <div class="fx"><i class="knob"></i><button aria-label="Вставить функцию">fx</button></div>
      <input class="formula" aria-label="Строка формул" />
      <button class="expand" aria-label="Развернуть строку формул">${box(8, 6, svg`<path d="M1 1l3 3 3-3" fill="none" stroke="#444" stroke-width="2"/>`)}</button>
    </div>`;
  }

  private cell(c: number, r: number) {
    const key = COLS[c][0] + r;
    const fill = fillOf(c, r);
    const [text, cls] = TEXTS[key] ?? ["", ""];
    return html`<td class="${fill} ${fill ? "filled" : ""} ${cls}">${text}</td>`;
  }

  private grid() {
    return html`<table>
      <colgroup><col style="width:26px" />${COLS.map(([, w]) => (w ? html`<col style="width:${w}px" />` : html`<col />`))}</colgroup>
      <thead><tr><th><i class="corner"></i></th>${COLS.map(([n]) => html`<th scope="col" class=${classMap({ hot: "MNO".includes(n), last: n === "S" })}>${n}</th>`)}</tr></thead>
      <tbody>${ROWS.map((h, i) => {
        const r = i + 1;
        return html`<tr style="height:${h}px"><th scope="row" class=${classMap({ hot: r >= 9 && r <= 12 })}>${r}</th>
          ${r === 1
            ? html`<td class="sage filled heading" colspan="8"><div><a>Справка по элементам управления</a>  (все варианты записи для итогового отчета</div><div>формул, выражений и установки элементов управления )</div></td>${COLS.slice(8).map((_, k) => this.cell(k + 8, 1))}`
            : COLS.map((_, c) => this.cell(c, r))}</tr>`;
      })}</tbody>
    </table>`;
  }

  private cellBorders() {
    const r = (x: number, y: number, w: number, h: number) => svg`<rect x=${x} y=${y} width=${w} height=${h} />`;
    const inner = [480, 501, 522, 543, 567];
    return html`<svg class="lines" width="1260" height="560" viewBox="0 163 1260 560" shape-rendering="crispEdges" aria-hidden="true">
      ${r(141, 226, 614, 3)}${r(141, 226, 3, 62)}${r(141, 285, 614, 3)}
      ${r(191, 227, 1, 60)}${r(270, 227, 2, 60)}${r(352, 227, 1, 60)}${r(425, 227, 1, 60)}${r(498, 227, 1, 60)}
      ${r(143, 264, 534, 1)}${r(143, 266, 534, 1)}${r(677, 265, 78, 3)}
      ${r(610, 180, 3, 255)}${r(675, 180, 3, 255)}${r(753, 180, 3, 108)}${r(612, 180, 143, 1)}
      ${[307, 328, 349, 370, 391, 412, 432].map((y) => r(611, y, 66, 3))}
      ${r(351, 287, 3, 118)}${r(352, 432, 260, 1)}${r(352, 434, 260, 1)}
      ${r(141, 456, 213, 3)}${r(141, 588, 213, 3)}${r(141, 456, 3, 135)}${r(351, 456, 3, 135)}
      ${[190, 192, 269, 271].map((x) => r(x, 458, 1, 130))}
      ${inner.map((y) => [r(143, y, 209, 1), r(143, y + 2, 209, 1)])}
    </svg>`;
  }

  private arrows() {
    const head = (id: string, color: string) => svg`<marker id=${id} viewBox="0 0 10 10" refX="9" refY="5" markerWidth="10" markerHeight="10" markerUnits="userSpaceOnUse" orient="auto"><path d="M1 1l8 4-8 4" fill="none" stroke=${color} stroke-width="1.200"/></marker>`;
    const ln = (id: string, color: string, p: number[][]) => p.map(([a, b, c, d]) => svg`<path d="M${a} ${b}L${c} ${d}" stroke=${color} marker-end="url(#${id})" />`);
    return html`<svg class="arrows" width="1260" height="560" viewBox="0 163 1260 560" fill="none" aria-hidden="true">
      <defs>${head("hb", "#4a7ebb")}${head("hr", "#f01818")}${head("ho", "#f79646")}</defs>
      <g stroke="#385d8a">
        <path fill="#4f81bd" d="M325 304C336 314 350 322 366 322C384 322 396 314 404 299L400 298L417 291L422 306L416 304C405 318 390 324 374 324C352 325 334 316 322 306Z"/>
        <path fill="#4f81bd" d="M321 306C323 318 340 326 360 326L358 321L368 332L358 343V337C340 336 322 332 321 314Z"/>
        <path fill="#40699c" d="M365 281V293C350 293 336 296 328 303C323 308 323 314 326 319C320 314 319 304 322 299C328 287 344 281 365 281Z"/>
        <path fill="#40699c" d="M302 263L313 265C311 283 318 297 333 308C342 315 352 318 364 322C348 322 334 316 322 305C308 293 300 280 302 263Z"/>
        <path fill="#40699c" d="M471 227C480 217 494 212 508 212C520 211 535 215 548 221C575 234 603 251 618 270C640 298 658 335 659 358L646 350C642 325 626 290 606 266C592 252 580 244 566 237C552 229 530 223 513 224C500 225 490 231 483 238Z"/>
        <path fill="#4f81bd" d="M618 270C640 298 661 340 659 364L656 377L662 378L641 382L637 356L644 362C648 342 638 312 628 294C622 284 616 276 611 270Z"/>
      </g>
      ${ln("hb", "#4a7ebb", [[558, 369, 317, 281], [580, 370, 392, 281], [461, 278, 607, 364], [542, 393, 197, 438], [153, 439, 83, 406], [148, 452, 65, 442]])}
      ${ln("ho", "#f79646", [[142, 322, 402, 334]])}
      ${ln("hr", "#f01818", [[589, 280, 643, 426], [466, 427, 587, 470], [507, 425, 188, 505], [563, 424, 251, 531]])}
      <path d="M165 487.500h-2.500v94.500h3M162 534.500h-3M239 484.500h-2V577h3M237 530.500h-3" stroke="#f04040"/>
    </svg>`;
  }

  private objects() {
    return html`
      <div class="obj frame checks"><label><input type="checkbox" />0 %</label><label><input type="checkbox" />15%</label></div>
      <div class="obj frame radios"><label><input type="radio" name="pct" checked />При 15%</label><label><input type="radio" name="pct" />При 0%</label></div>
      <div class="obj picker bigpick"><select aria-label="День"><option>понед</option></select><button aria-label="Открыть список">${box(42, 20, svg`<path d="M0 0h42L21 20z"/>`)}</button></div>
      <div class="obj hspin"><button aria-label="Назад">${box(7, 12, svg`<path d="M7 0v12L0 6z" fill="#444"/>`)}</button><button aria-label="Вперёд">${box(7, 12, svg`<path d="M0 0v12l7-6z" fill="#666"/>`)}</button></div>
      <div class="obj vspin"><button aria-label="Больше">${box(10, 5, svg`<path d="M0 5h10L5 0z"/>`)}</button><button aria-label="Меньше">${box(10, 5, svg`<path d="M0 0h10L5 5z"/>`)}</button></div>
      <button class="cmd c1">Титульный</button><button class="cmd c2">Лист заказа</button>
      <button class="cmd c3">Справка</button><button class="cmd c4">Промежуточные данные</button><button class="cmd c5">Кнопка 149</button>
      <div class="obj picker combo"><select aria-label="День недели"><option>пятн</option></select><button aria-label="Открыть">${box(12, 6, svg`<path d="M0 0h12L6 6z"/>`)}</button></div>
      <label class="obj caption" for="variants">Варианты</label>
      <div class="obj list"><select id="variants" size="5"><option>понед</option><option>вторн</option><option selected>среда</option><option>четв</option><option>пятн</option></select>
        <div class="lscroll">${box(7, 4, svg`<path d="M0 4h7L3.500 0z" fill="#444"/>`)}${tri()}</div></div>
      <div class="pic p1">=ЕСЛИ(B4=ИСТИНА;C3*D3;" ")</div>
      <div class="pic p2">=ЕСЛИ(B5=ИСТИНА;C3*D3+(C3*D3*0,15);" ")</div>
      <div class="pic p3">=ЕСЛИ(C11=1;F3;E3)</div>
      <div class="pic p4">=ПРОСМОТР(<span class="blue">H12</span>;<span class="grn">C13:C17</span>;<span class="vio">D13:D17</span>)|</div>`;
  }

  private dialog() {
    return html`<section class="dialog" role="dialog" aria-label="Запись макроса">
      <div class="dtitle"><span>Запись макроса</span><div class="dbtns">
        <button aria-label="Справка">${box(10, 13, svg`<path d="M2 4c0-3 6-3 6 0 0 2-3 2-3 5M5 10.500v2" fill="none" stroke="#44515e" stroke-width="3.500"/><path d="M2 4c0-3 6-3 6 0 0 2-3 2-3 5M5 10.500v2" fill="none" stroke="#fff" stroke-width="1.800"/>`)}</button>
        <button class="close" aria-label="Закрыть">${box(12, 10, svg`<path d="M2 1l8 8M10 1L2 9" stroke="#6b2c22" stroke-width="4"/><path d="M2 1l8 8M10 1L2 9" stroke="#fff" stroke-width="2.500"/>`)}</button></div></div>
      <div class="dbody">
        <label for="mname"><u>И</u>мя макроса:</label>
        <input id="mname" class="field" value="База данных" />
        <label class="space" for="mkey">Сочетание <u>к</u>лавиш:</label>
        <div class="keys">Ctrl+<input id="mkey" /></div>
        <label class="space" for="mstore">Сохранить <u>в</u>:</label>
        <div class="field sel"><select id="mstore"><option>Эта книга</option></select><button aria-label="Открыть">${tri("#000")}</button></div>
        <label class="space" for="mdesc"><u>О</u>писание:</label>
        <textarea id="mdesc" class="field"></textarea>
        <div class="acts"><button class="def">ОК</button><button>Отмена</button></div>
      </div>
    </section>`;
  }

  firstUpdated() {
    const name = this.renderRoot.querySelector<HTMLInputElement>("#mname");
    name?.focus();
    name?.select();
  }

  private sheetTabs() {
    const slash = () => box(12, 14, svg`<path d="M0 14L11 0h1v14z" fill="#e8ebf0"/><path d="M0 14L11.500 0" stroke="#7e848c"/>`);
    const tabs: [string, number][] = [["Титульный", 73], ["Лист заказа", 76], ["Справка", 56], ["Промежуточнае данные", 160], ["База данных", 84]];
    const nav = ["M1 1v8M8 1v8L3 5z", "M7 1v8L2 5z", "M2 1v8l5-4z", "M8 1v8M1 1v8l5-4z"];
    return html`<div class="sheets">
      <div class="nav">${nav.map((d) => html`<button aria-label="Листы">${box(10, 10, svg`<path d=${d} fill="#4a525c" stroke="#4a525c"/>`)}</button>`)}</div>
      <button class="tab act" style="width:79px">Элементы</button>${slash()}
      ${tabs.map(([t, w]) => html`<button class="tab" style="width:${w}px">${t}</button>${slash()}`)}
      <button class="tab" style="width:20px" aria-label="Вставить лист">${box(15, 13, svg`<path d="M4 3h10v7l-2 2H4z" fill="#fff" stroke="#4b6da8"/><path d="M3.500 0v7M0 3.500h7M1 1l5 5M6 1L1 6" stroke="#e89a1c"/>`)}</button>${slash()}
      <i class="hsplit"></i>
      <div class="hs"><button aria-label="Влево">${box(5, 9, svg`<path d="M5 0v9L0 4.500z" fill="#333"/>`)}</button>
        <div class="hthumb">${box(8, 7, svg`<path d="M.5 0v7M2.500 0v7M4.500 0v7M6.500 0v7" stroke="#777"/>`)}</div>
        <button aria-label="Вправо">${box(5, 9, svg`<path d="M0 0v9l5-4.500z" fill="#333"/>`)}</button><i class="hsplit"></i></div>
    </div>`;
  }

  private status() {
    const g = (d: string) => box(14, 12, svg`<path d=${d} fill="#f2f3f5" stroke="#5a5f66"/>`);
    const knob = (d: string) => box(16, 16, svg`<circle cx="8" cy="8" r="7" fill="#e6e8ea" stroke="#b3b6bb"/><path d=${d} stroke="#a2a5aa" stroke-width="2"/>`);
    return html`<div class="status">Готово<i class="s"></i>
      ${box(15, 14, svg`<rect x="1.500" y="2.500" width="13" height="11" fill="#fff" stroke="#5470a8"/><path d="M2 4h12" stroke="#5470a8" stroke-width="2"/><path d="M3 7.500h10M3 9.500h10M3 11.500h10" stroke="#8ba3cc" stroke-dasharray="2 1"/><circle cx="3.500" cy="3.500" r="3" fill="#d8452c"/>`)}<i class="s"></i>
      <i class="s push"></i>
      <div class="views">${g("M.5 .5h12v10h-12zM.5 4h12M.5 7.500h12M4.500 .5v10M8.500 .5v10")}${g("M.5 .5h12v10h-12zM4 3h6v6H4zM5 5h4M5 7h4")}${g("M.5 .5h12v10h-12zM4.500 .5v6h-4M8.500 .5v6h4M4.500 6h4")}</div>
      <span class="zoom">90%</span><button aria-label="Уменьшить">${knob("M4 8h8")}</button><div class="track"><i></i></div><button aria-label="Увеличить">${knob("M4 8h8M8 4v8")}</button>
    </div>`;
  }

  private taskbar() {
    const apps: [string, string, unknown][] = [
      ["Проводник", "run", box(34, 30, svg`<path d="M2 4h8l2 3h18v20H4z" fill="#e8c66c" stroke="#b98e36"/><path d="M4 1h5v4H4z" fill="#3aa53a"/><path d="M12 3h6v4h-6z" fill="#d9482f"/><path d="M20 5h7v4h-7z" fill="#4a86cf"/><path d="M3 9h29v19H3z" fill="#f7e5a0" stroke="#c9a24c"/><path d="M7 29v-7c0-3 2-4 4-4h13c2 0 4 1 4 4v7h-4v-6H11v6z" fill="#a6d8f2" stroke="#5fa5cf"/>`)],
      ["Internet Explorer", "", box(34, 32, svg`<circle cx="17" cy="17" r="10" fill="none" stroke="#165fa8" stroke-width="6"/><path d="M8 12a10 10 0 0 1 16-3" fill="none" stroke="#58b4ee" stroke-width="3"/><path d="M10 17h17" stroke="#5fb8ee" stroke-width="4"/><path d="M20 22h10" stroke="#3590cd" stroke-width="4"/><path d="M4 29C-1 24 12 8 24 3c6-3 8 0 6 5 1-6-5-4-12 1C9 16 4 25 4 29z" fill="#f5bf2d" stroke="#d8961c"/>`)],
      ["Проигрыватель", "", box(32, 30, svg`<path d="M7 3h18v24H7z" fill="#bcdcf0" stroke="#7fb2d4"/><path d="M25 5h3v21h-3z" fill="#8ec1e0"/><circle cx="12" cy="15" r="9" fill="#f07a1c" stroke="#f9b06c"/><path d="M9 10v10l8-5z" fill="#fff"/>`)],
      ["Почта", "run", box(34, 34, svg`<path d="M17 1a16 16 0 1 1-7 30H1l4-6A16 16 0 0 1 17 1z" fill="#2faf35"/><circle cx="17" cy="17" r="5" fill="none" stroke="#fff" stroke-width="2.600"/><path d="M22 12v7c0 4 6 3 6-2A11 11 0 1 0 22 27" fill="none" stroke="#fff" stroke-width="2.600"/>`)],
      ["Amigo", "", box(34, 32, svg`<path d="M7 4c4-4 12-4 14 1l5 16c1 4 3 6 6 8-4 2-9 3-11-1l-2-7-7 1-4 8H2c5-5 7-12 9-20-1-3-3-4-4-6z" fill="#3ec132" stroke="#1c7f1a"/><path d="M9 5c4-3 9-3 11 1l3 11c-3 2-6 2-9 1l3-10c-2-3-5-3-8-3z" fill="#6fe35a" opacity=".7"/><path d="M15 9l-3 9h6z" fill="#2a86c4"/>`)],
      ["Одноклассники", "", box(32, 32, svg`<rect width="32" height="32" rx="6" fill="#f37321"/><circle cx="16" cy="11" r="4" fill="none" stroke="#fff" stroke-width="3"/><path d="M10 18c4 3 8 3 12 0M16 21l-5 5M16 21l5 5" fill="none" stroke="#fff" stroke-width="3" stroke-linecap="round"/>`)],
      ["ВКонтакте", "", box(32, 32, svg`<rect width="32" height="32" rx="4" fill="#4b73a5"/><text x="9" y="23" font-size="20" font-weight="800" fill="#fff">B</text>`)],
      ["Яндекс", "", box(32, 32, svg`<circle cx="16" cy="16" r="15" fill="#e9ecef" stroke="#b8bcc2"/><path d="M2 7c6-3 10 0 14 8 1-6 5-10 13-11-5 4-8 10-9 16v11h-6V19C12 12 8 9 2 7z" fill="#e31b1b"/>`)],
      ["Музыка", "", box(30, 30, svg`<rect width="30" height="30" rx="3" fill="#fff"/><path d="M9 17V6l7-2v3l-5 2v9" fill="#4caf50"/><circle cx="8" cy="19" r="3" fill="#4caf50"/><path d="M18 22V10l7-2v3l-5 2v10" fill="#f7931e"/><circle cx="17" cy="24" r="3" fill="#f7931e"/>`)],
      ["Skype", "run", box(32, 32, svg`<circle cx="10" cy="10" r="8" fill="#00aff0"/><circle cx="16" cy="16" r="13" fill="#00aff0"/><path d="M20 11c-2-4-10-3-9 1s9 3 9 7-8 4-10 0" fill="none" stroke="#fff" stroke-width="3.500"/><circle cx="24" cy="24" r="7" fill="#27b6ee"/><path d="M21 23c1-2 4-2 5 0h-2M27 25c-1 2-4 2-5 0h2" stroke="#fff" fill="none" stroke-width="1.300"/>`)],
      ["Excel", "run cur", box(30, 30, svg`<path d="M1 1h26v26H1z" fill="#dff0d6" stroke="#37823c" stroke-width="1.500"/><path d="M3 4h6l4 6 4-6h5l-6 10 7 11h-6l-5-7-4 7H3l6-11z" fill="#278a3a"/><path d="M18 14l11 3-2 12-13-3z" fill="#fff" stroke="#9bbf92"/><path d="M18 18l9 2M17 21l9 2M17 24l8 2" stroke="#8fb386"/>`)],
      ["Word", "run", box(30, 30, svg`<path d="M1 1h26v26H1z" fill="#e6eefa" stroke="#5273b0" stroke-width="1.500"/><path d="M3 5h5l2 12 3-12h4l2 12 3-12h4l-5 19h-5l-2-9-3 9H6z" fill="#2455a8"/><path d="M20 17l9 2-2 10-10-2z" fill="#fff" stroke="#9aaed2"/>`)],
    ];
    const tray: [string, unknown][] = [
      ["Обновление", svg`<circle cx="8" cy="8" r="7.500" fill="#12a5e8"/><path d="M4 9V6h5M12 7v3H7" stroke="#fff" stroke-width="1.500" fill="none"/>`],
      ["Bluetooth", svg`<ellipse cx="8" cy="8" rx="5.500" ry="7.500" fill="#10386f"/><path d="M5 5l6 6-3 3V2l3 3-6 6" stroke="#fff" fill="none" stroke-width="1.300"/>`],
      ["Защита", svg`<rect x="1" y="1" width="13" height="13" rx="4" fill="#7cc530" stroke="#333"/><path d="M3 4l8 6M3 8h9M4 11l7-8" stroke="#2c4a12"/><path d="M10 5l6 10H4z" fill="#ffc928" stroke="#a86f00"/><path d="M10 8v4M10 13v1" stroke="#222"/>`],
      ["Агент", svg`<circle cx="8" cy="8" r="6.500" fill="none" stroke="#f5a81c" stroke-width="1.800"/><circle cx="8" cy="8" r="2.500" fill="none" stroke="#f5a81c" stroke-width="1.800"/><path d="M11 5v5h3" stroke="#f5a81c" fill="none" stroke-width="1.500"/>`],
      ["Amigo", svg`<path d="M5 1h6l4 13h-4l-1-3H6l-1 3H1z" fill="#36cf35"/><path d="M7 5h2l1 3H6z" fill="#174a80"/>`],
      ["Центр поддержки", svg`<path d="M2 1v14M3 2c4-2 5 2 10 0v7c-5 2-6-2-10 0z" fill="#fff" stroke="#fff"/><circle cx="11" cy="11" r="4.500" fill="#d32a1c"/><path d="M9 9l4 4M13 9l-4 4" stroke="#fff"/>`],
      ["Питание", svg`<rect x="1.500" y="2.500" width="8" height="12" fill="none" stroke="#fff" stroke-width="1.500"/><path d="M8 4h6v4l-3 3-3-3zM9 1v3M13 1v3M11 10v4" fill="#fff" stroke="#fff"/>`],
      ["Сеть", svg`<path d="M0 12h2v3H0zM3 10h2v5H3zM6 7h2v8H6zM9 4h2v11H9zM13 1h2v14h-2z" fill="#73808f"/><circle cx="11" cy="10" r="4" fill="#fbb62c"/><path d="M11 4v12M5 10h12M7 6l8 8M15 6l-8 8" stroke="#f39a1c"/>`],
      ["Звук", svg`<path d="M1 5h3l4-4v14l-4-4H1z" fill="#fff"/><circle cx="11" cy="10" r="4" fill="#d32a1c" stroke="#fff"/><path d="M8.500 7.500l5 5" stroke="#fff"/>`],
    ];
    return html`<footer class="taskbar">
      <button class="start" aria-label="Пуск">${box(38, 38, svg`<circle cx="19" cy="19" r="17.500" fill="#1d4f80" stroke="#a9c9e0"/><path d="M4 15a16 16 0 0 1 30 0c-8 4-22 4-30 0z" fill="#7fa9c8" opacity=".8"/><path d="M10 12c3-2 5-2 8 0l-2 7c-3-2-5-2-8 0z" fill="#e8552b"/><path d="M20 12c3 2 5 2 9 0l-2 7c-3 2-6 2-9 0z" fill="#8cc63f"/><path d="M8 21c3-2 5-2 8 0l-2 7c-3-2-5-2-8 0z" fill="#3f9ae0"/><path d="M17 21c3 2 6 2 9 0l-2 7c-3 2-5 2-8 0z" fill="#fbc02d"/>`)}</button>
      <div class="apps">${apps.map(([n, c, i]) => html`<button class=${c} aria-label=${n}>${i}</button>`)}</div>
      <div class="tray"><span class="lang">RU</span>${tray.map(([n, i]) => html`<button aria-label=${n}>${box(17, 16, i)}</button>`)}
        <div class="clock">13:45<br>03.04.2015</div><button class="desk" aria-label="Рабочий стол"></button></div>
    </footer>`;
  }

  render() {
    return html`${this.title()}${this.ribbon()}${this.formulaBar()}
      <main class="work">
        <div class="sheet">${this.grid()}${this.cellBorders()}${this.objects()}${this.arrows()}${this.dialog()}</div>
        <div class="vscroll"><i class="vsplit">${box(7, 1, svg`<path d="M0 .5h7" stroke="#777"/>`)}</i><button class="up" aria-label="Вверх">${box(9, 5, svg`<path d="M0 5h9L4.500 0z" fill="#444"/>`)}</button>
          <div class="vthumb">${box(7, 8, svg`<path d="M0 .5h7M0 2.500h7M0 4.500h7M0 6.500h7" stroke="#777"/>`)}</div>
          <button class="down" aria-label="Вниз">${box(9, 5, svg`<path d="M0 0h9L4.500 5z" fill="#444"/>`)}</button></div>
      </main>
      ${this.sheetTabs()}${this.status()}${this.taskbar()}`;
  }
}
